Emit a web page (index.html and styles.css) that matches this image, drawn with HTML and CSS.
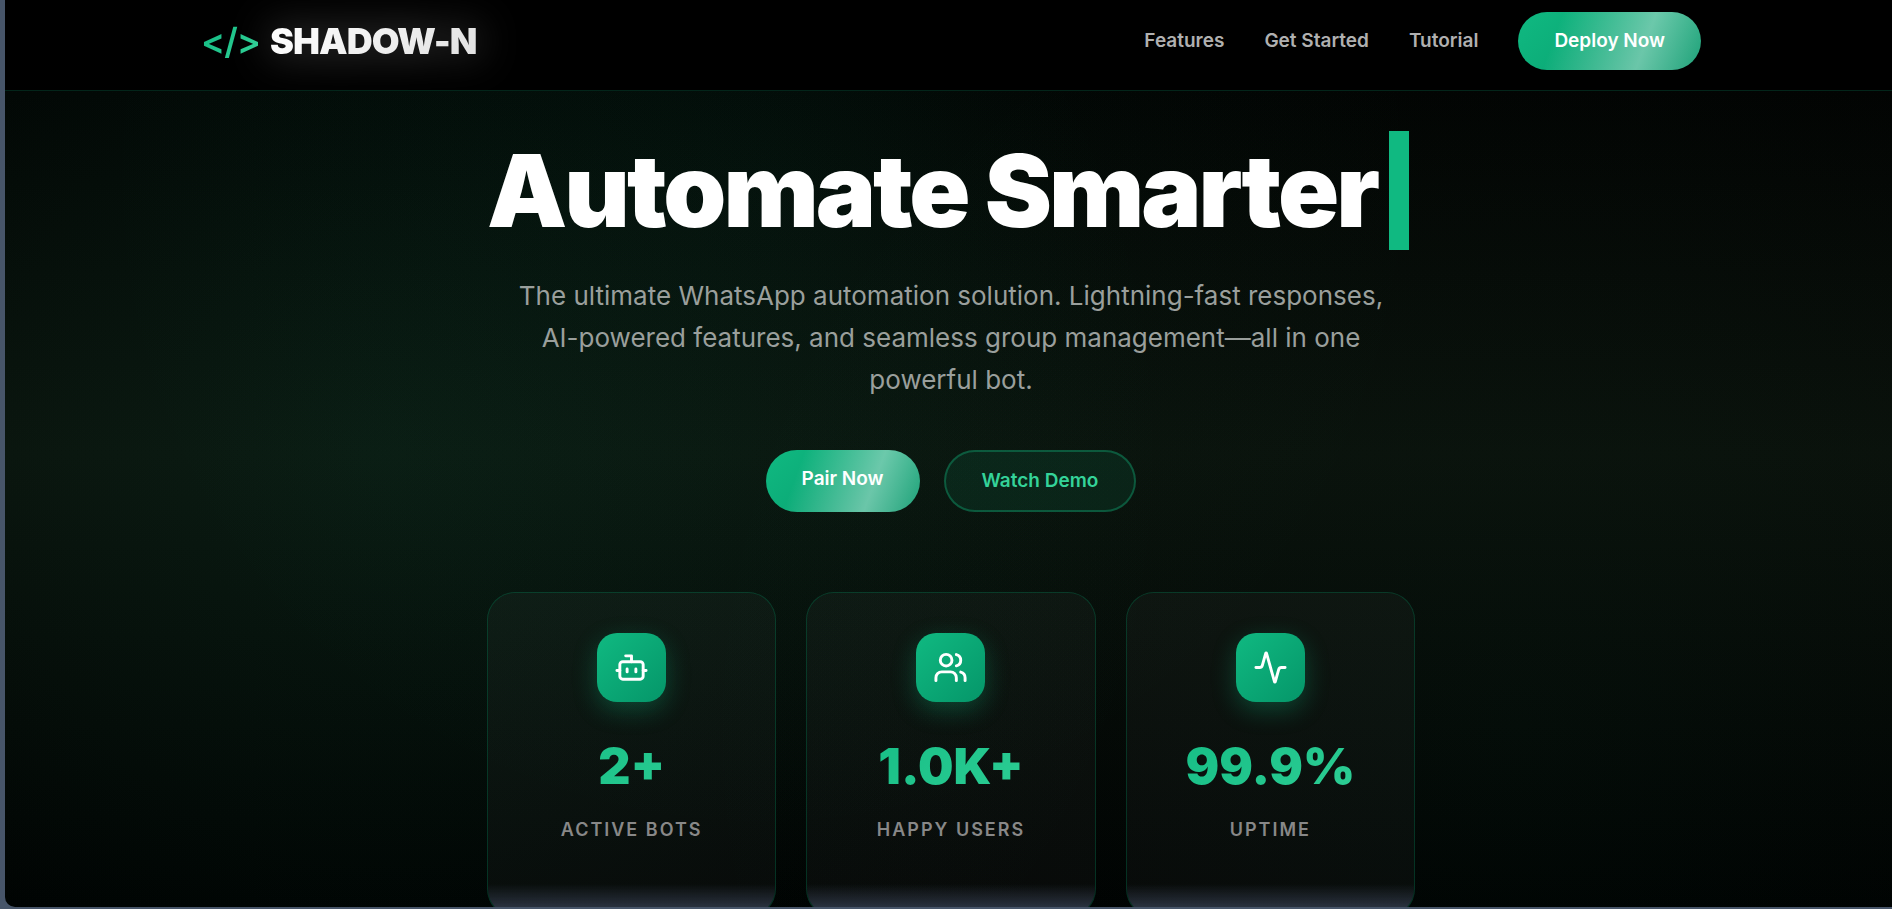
FILE: index.html
```
<!DOCTYPE html>
<html lang="en">

<head>
    <meta charset="UTF-8">
    <title>SHADOW-N</title>
    <link rel="stylesheet" href="styles.css">
</head>

<body>
    <div class="page">
        <header class="header">
            <nav class="nav">
                <a class="logo" href="#">
                    <span class="logo-icon">&lt;/&gt;</span>
                    <span class="logo-text">SHADOW-N</span>
                </a>
                <div class="nav-links">
                    <a href="#features">Features</a>
                    <a href="#start">Get Started</a>
                    <a href="#tutorial">Tutorial</a>
                    <a class="btn btn-nav" href="#deploy">Deploy Now</a>
                </div>
            </nav>
        </header>

        <main class="hero">
            <h1>Automate Smarter<span class="cursor"></span></h1>
            <p class="hero-text">The ultimate WhatsApp automation solution. Lightning-fast responses, AI-powered features, and seamless group management—all in one powerful bot.</p>

            <div class="hero-buttons">
                <a class="btn btn-primary" href="#pair">Pair Now</a>
                <a class="btn btn-secondary" href="#demo">Watch Demo</a>
            </div>

            <div class="stats">
                <div class="stat-card">
                    <div class="stat-icon">
                        <svg viewBox="0 0 24 24">
                            <path d="M12 8V4H8" />
                            <rect width="16" height="12" x="4" y="8" rx="2" />
                            <path d="M2 14h2M20 14h2M15 13v2M9 13v2" />
                        </svg>
                    </div>
                    <div class="stat-number">2+</div>
                    <div class="stat-label">Active Bots</div>
                </div>
                <div class="stat-card">
                    <div class="stat-icon">
                        <svg viewBox="0 0 24 24">
                            <path d="M16 21v-2a4 4 0 0 0-4-4H6a4 4 0 0 0-4 4v2" />
                            <circle cx="9" cy="7" r="4" />
                            <path d="M22 21v-2a4 4 0 0 0-3-3.87M16 3.13a4 4 0 0 1 0 7.75" />
                        </svg>
                    </div>
                    <div class="stat-number">1.0K+</div>
                    <div class="stat-label">Happy Users</div>
                </div>
                <div class="stat-card">
                    <div class="stat-icon">
                        <svg viewBox="0 0 24 24">
                            <path d="M22 12h-2.48a2 2 0 0 0-1.93 1.46l-2.35 8.36a.25.25 0 0 1-.48 0L9.24 2.18a.25.25 0 0 0-.48 0l-2.35 8.36A2 2 0 0 1 4.49 12H2" />
                        </svg>
                    </div>
                    <div class="stat-number">99.9%</div>
                    <div class="stat-label">Uptime</div>
                </div>
            </div>
        </main>
    </div>
</body>

</html>
```
FILE: styles.css
```
* {
    margin: 0;
    padding: 0;
    box-sizing: border-box;
}

body {
    height: 100vh;
    padding: 0 0 2px 5px;
    background: #475569;
    font-family: Inter, "Liberation Sans", sans-serif;
    color: #fff;
    overflow: hidden;
}

a {
    text-decoration: none;
}

.page {
    height: 100%;
    margin-right: -5px;
    border-radius: 0 0 0 10px;
    overflow: hidden;
    background:
        radial-gradient(circle at 20% 50%, rgba(16, 185, 129, .08) 0%, transparent 50%),
        radial-gradient(circle at 80% 80%, rgba(16, 185, 129, .04) 0%, transparent 50%),
        radial-gradient(circle at 40% 20%, rgba(16, 185, 129, .04) 0%, transparent 50%),
        linear-gradient(180deg, #000 0%, #0a0f0a 50%, #000 100%);
}

/* header */
.header {
    height: 91px;
    padding: 0 40px;
    background: #000;
    border-bottom: 1px solid rgba(16, 185, 129, .2);
}

.nav {
    max-width: 1500px;
    height: 81px;
    margin: 0 auto;
    display: flex;
    align-items: center;
    justify-content: space-between;
}

.logo {
    display: flex;
    align-items: center;
    gap: 10px;
    font-size: 36px;
    font-weight: 900;
    letter-spacing: -1px;
}

.logo-icon {
    font-weight: 600;
    background: linear-gradient(135deg, #10b981, #34d399);
    -webkit-background-clip: text;
    color: transparent;
}

.logo-text {
    background: linear-gradient(135deg, #fff, #e0e0e0);
    -webkit-background-clip: text;
    color: transparent;
    filter: drop-shadow(0 0 20px rgba(255, 255, 255, .3));
}

.nav-links {
    display: flex;
    align-items: center;
    gap: 40px;
}

.nav-links a {
    font-size: 19px;
    font-weight: 600;
    color: #b0b0b0;
}

/* buttons */
.btn {
    border-radius: 50px;
    font-size: 19px;
    font-weight: 600;
}

.btn-nav,
.btn-primary {
    padding: 18px 36px;
    line-height: 22px;
    background:
        linear-gradient(110deg, transparent 22%, rgba(255, 255, 255, .4) 68%, rgba(255, 255, 255, .1) 100%),
        linear-gradient(135deg, #10b981, #059669);
}

.nav-links .btn-nav {
    color: #fff;
}

.btn-primary {
    color: #fff;
}

.btn-secondary {
    padding: 18px 36px;
    border: 2px solid rgba(16, 185, 129, .35);
    line-height: 22px;
    background: rgba(16, 185, 129, .1);
    color: #34d399;
}

/* hero */
.hero {
    max-width: 928px;
    margin: 0 auto;
    padding-top: 40px;
    text-align: center;
}

h1 {
    display: flex;
    justify-content: center;
    font-size: 101px;
    font-weight: 900;
    line-height: 119px;
    letter-spacing: -3px;
    white-space: nowrap;
}

.cursor {
    flex-shrink: 0;
    width: 20px;
    margin: 0 6px 0 12px;
    background: #10b981;
}

.hero-text {
    max-width: 880px;
    margin: 25px auto 49px;
    font-size: 26px;
    line-height: 42px;
    color: #9a9f9c;
}

.hero-buttons {
    display: flex;
    justify-content: center;
    gap: 24px;
    margin-bottom: 80px;
}

/* stats */
.stats {
    display: grid;
    grid-template-columns: repeat(3, 1fr);
    gap: 30px;
}

.stat-card {
    height: 325px;
    padding-top: 40px;
    border: 1px solid rgba(16, 185, 129, .25);
    border-radius: 28px;
    background:
        linear-gradient(0deg, #334155 0, #28303c 10px, transparent 32px) padding-box,
        linear-gradient(180deg, rgba(255, 255, 255, .03), rgba(255, 255, 255, .03)) padding-box;
}

.stat-icon {
    width: 69px;
    height: 69px;
    margin: 0 auto 24px;
    display: flex;
    align-items: center;
    justify-content: center;
    border-radius: 20px;
    background: linear-gradient(135deg, #10b981, #059669);
    box-shadow: 0 8px 24px rgba(16, 185, 129, .3);
}

.stat-icon svg {
    width: 35px;
    height: 35px;
    fill: none;
    stroke: #fff;
    stroke-width: 2;
    stroke-linecap: round;
    stroke-linejoin: round;
}

.stat-number {
    margin-bottom: 10px;
    font-size: 50px;
    font-weight: 900;
    line-height: 80px;
    background: linear-gradient(135deg, #10b981, #34d399);
    -webkit-background-clip: text;
    color: transparent;
}

.stat-label {
    font-size: 18px;
    font-weight: 600;
    line-height: 28px;
    letter-spacing: 2px;
    text-transform: uppercase;
    color: #888;
}
```
